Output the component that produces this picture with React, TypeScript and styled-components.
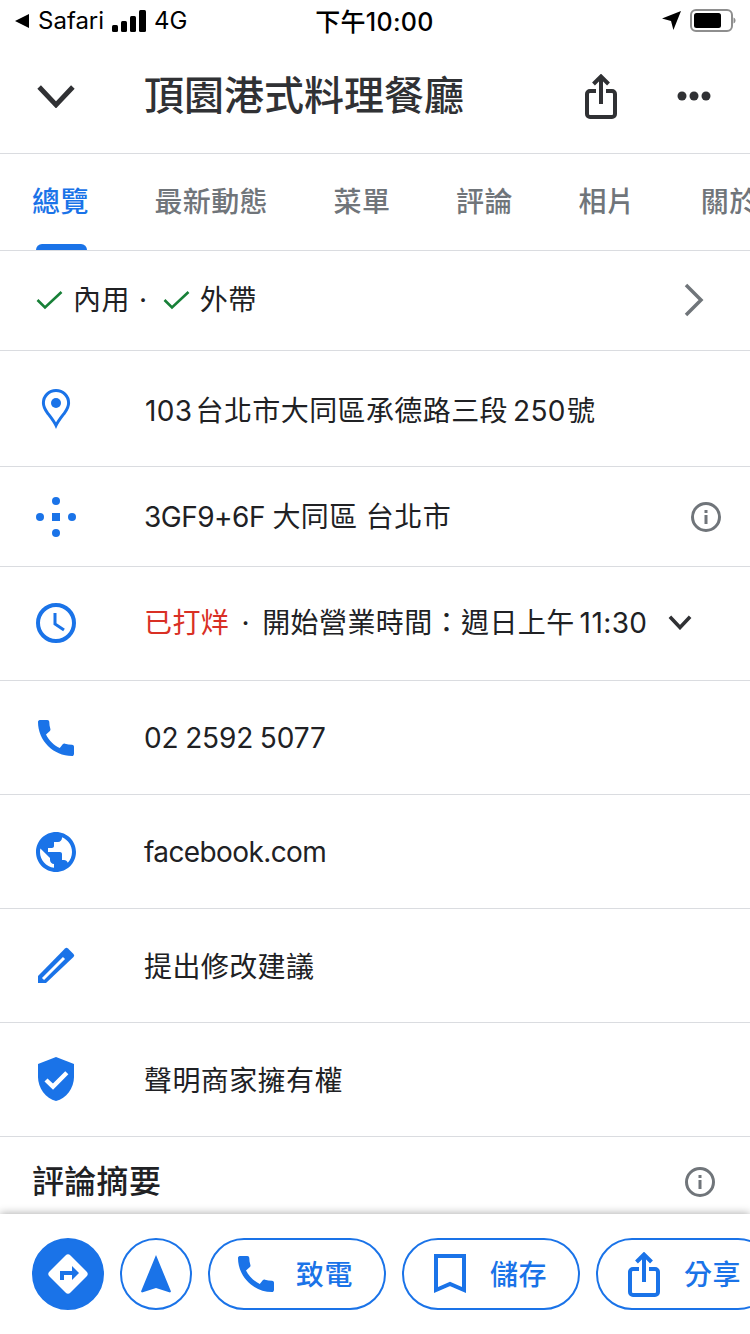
import React from 'react';
import styled, { createGlobalStyle } from 'styled-components';

const BLUE = '#1a73e8';
const GRAY = '#70757a';
const INK = '#202124';
const DARK = '#303134';
const LINE = '#dadce0';

const GlobalStyle = createGlobalStyle`
    html, body {
        margin: 0;
        padding: 0;
        background: #fff;
    }
    body {
        font-family: Inter, "Noto Sans CJK TC", sans-serif;
        color: ${INK};
    }
`;

const Page = styled.div`
    width: 750px;
    height: 1334px;
    display: flex;
    flex-direction: column;
    overflow: hidden;
    background: #fff;
`;

const StatusBar = styled.div`
    height: 41px;
    flex: none;
    padding: 0 14px 0 15px;
    box-sizing: border-box;
    display: grid;
    grid-template-columns: 1fr auto 1fr;
    align-items: center;
    font-size: 24px;
    color: #000;
`;

const StatusLeft = styled.div`
    display: flex;
    align-items: center;
    gap: 8px;
`;

const Carrier = styled.span`
    margin-left: 1px;
`;

const StatusRight = styled.div`
    display: flex;
    align-items: center;
    justify-content: flex-end;
    gap: 9px;
`;

const Time = styled.div`
    margin: -2px 1px 0 -1px;
    font-size: 25px;
    font-weight: 500;
    letter-spacing: 0.3px;
`;

const Header = styled.header`
    height: 113px;
    flex: none;
    display: flex;
    align-items: center;
    padding: 0 39px 2px 36px;
    border-bottom: 1px solid ${LINE};
    box-sizing: border-box;
`;

const BackSlot = styled.div`
    width: 108px;
    display: flex;
    flex: none;
`;

const Title = styled.h1`
    flex: 1;
    margin: 0;
    font-size: 40px;
    font-weight: 500;
    color: ${DARK};
    line-height: 1;
`;

const HeaderActions = styled.div`
    display: flex;
    align-items: center;
    gap: 60px;
`;

const Tabs = styled.nav`
    height: 97px;
    flex: none;
    display: flex;
    gap: 65.6px;
    padding-left: 32px;
    border-bottom: 1px solid ${LINE};
    box-sizing: border-box;
    overflow: hidden;
`;

const Tab = styled.div<{ $active?: boolean }>`
    position: relative;
    flex: none;
    display: flex;
    align-items: center;
    padding-bottom: 4px;
    font-size: 28px;
    font-weight: 500;
    letter-spacing: 0.4px;
    white-space: nowrap;
    color: ${p => (p.$active ? BLUE : GRAY)};
    ${p =>
        p.$active &&
        `&::after {
            content: '';
            position: absolute;
            left: 4px;
            right: 2px;
            bottom: 0;
            height: 6px;
            border-radius: 6px 6px 0 0;
            background: ${BLUE};
        }`}
`;

const Content = styled.main`
    flex: 1;
    min-height: 0;
    overflow: hidden;
`;

const Row = styled.div<{ $h: number; $left?: number; $right?: number; $lift?: number }>`
    height: ${p => p.$h}px;
    display: flex;
    align-items: center;
    padding: 0 ${p => p.$right ?? 29}px ${p => p.$lift ?? 0}px ${p => p.$left ?? 32}px;
    border-bottom: 1px solid ${LINE};
    box-sizing: border-box;
    font-size: 28px;
    line-height: 1;
    letter-spacing: 0.4px;
`;

const IconSlot = styled.div`
    width: 48px;
    height: 48px;
    margin-right: 64px;
    flex: none;
    display: flex;
    align-items: center;
    justify-content: center;
`;

const RowText = styled.div<{ $drop?: number }>`
    flex: 1;
    white-space: nowrap;
    margin-top: ${p => p.$drop ?? 0}px;
`;

const Latin = styled.span<{ $ls: number; $ws?: number }>`
    letter-spacing: ${p => p.$ls}px;
    word-spacing: ${p => p.$ws ?? 0}px;
`;

const Services = styled.div`
    flex: 1;
    display: flex;
    align-items: center;
    gap: 3px;
`;

const ServiceItem = styled.span`
    display: inline-flex;
    align-items: center;
    gap: 10px;
`;

const ServiceDot = styled.span`
    width: 27px;
    padding-right: 6px;
    box-sizing: border-box;
    text-align: center;
`;

const Closed = styled.span`
    color: #d93025;
`;

const InlineDot = styled.span`
    display: inline-block;
    width: 33px;
    text-align: center;
`;

const Num = styled.span<{ $w: number }>`
    margin-left: ${p => p.$w}px;
`;

const SummaryRow = styled.div`
    height: 76px;
    display: flex;
    align-items: center;
    justify-content: space-between;
    padding: 25px 35px 11px 32px;
    box-sizing: border-box;
`;

const SummaryTitle = styled.h2`
    margin: 0;
    font-size: 32px;
    font-weight: 500;
    line-height: 40px;
    letter-spacing: 0.3px;
`;

const ActionBar = styled.footer`
    position: relative;
    height: 120px;
    flex: none;
    display: flex;
    gap: 16px;
    padding: 24px 0 0 32px;
    box-sizing: border-box;
    overflow: hidden;
    background: #fff;
    box-shadow: 0 -1px 8px rgba(0, 0, 0, 0.3);
`;

const RoundButton = styled.div<{ $filled?: boolean }>`
    width: 72px;
    height: 72px;
    flex: none;
    border-radius: 50%;
    border: 2px solid ${BLUE};
    box-sizing: border-box;
    display: flex;
    align-items: center;
    justify-content: center;
    background: ${p => (p.$filled ? BLUE : '#fff')};
`;

const PillButton = styled.div`
    width: 178px;
    height: 72px;
    flex: none;
    border-radius: 36px;
    border: 2px solid ${BLUE};
    box-sizing: border-box;
    display: flex;
    align-items: center;
    padding-left: 22px;
    gap: 16px;
    color: ${BLUE};
    font-size: 28px;
    font-weight: 500;
`;

const PillIcon = styled.div`
    width: 48px;
    height: 48px;
    flex: none;
    display: flex;
    align-items: center;
    justify-content: center;
`;

const PillLabel = styled.span`
    letter-spacing: 0.4px;
    margin-top: -2px;
`;

const BackArrow = () => (
    <svg width="14" height="14" viewBox="0 0 14 14">
        <path d="M14 0v14L0 7z" fill="#000" />
    </svg>
);

const Signal = () => (
    <svg width="34" height="22" viewBox="0 0 34 22">
        <rect x="0" y="15" width="6" height="7" rx="1.5" fill="#000" />
        <rect x="9" y="11" width="6" height="11" rx="1.5" fill="#000" />
        <rect x="18" y="6" width="6" height="16" rx="1.5" fill="#000" />
        <rect x="27" y="0" width="7" height="22" rx="1.5" fill="#000" />
    </svg>
);

const LocationArrow = () => (
    <svg width="19" height="19" viewBox="0 0 20 20">
        <path d="M20 0L12 20l-2.500-9.500L0 8z" fill="#000" />
    </svg>
);

const Battery = () => (
    <svg width="46" height="23" viewBox="0 0 46 23">
        <rect x="1" y="1" width="41" height="21" rx="5" fill="none" stroke="#8e8e8e" strokeWidth="2" />
        <rect x="4" y="4" width="27" height="15" rx="2.500" fill="#000" />
        <path d="M43.500 8.500c1.200.3 2 1.600 2 3s-.8 2.700-2 3z" fill="#8e8e8e" />
    </svg>
);

const ChevronDown = ({ size = 40, sw = 5 }: { size?: number; sw?: number }) => (
    <svg width={size} height={size * 0.62} viewBox="0 0 40 25">
        <path d="M3 3l17 18L37 3" fill="none" stroke={DARK} strokeWidth={sw} />
    </svg>
);

const ChevronRight = () => (
    <svg width="22" height="34" viewBox="0 0 22 34">
        <path d="M3 2l15 15L3 32" fill="none" stroke={GRAY} strokeWidth="3.500" />
    </svg>
);

const ShareIcon = ({ color, sw = 4 }: { color: string; sw?: number }) => (
    <svg width="32" height="45" viewBox="0 0 32 45">
        <path
            d="M11 17H5a3 3 0 0 0-3 3v20a3 3 0 0 0 3 3h22a3 3 0 0 0 3-3V20a3 3 0 0 0-3-3h-6"
            fill="none"
            stroke={color}
            strokeWidth={sw}
        />
        <path d="M16 30V4" fill="none" stroke={color} strokeWidth={sw} />
        <path d="M8.500 10L16 2.500 23.500 10" fill="none" stroke={color} strokeWidth={sw} />
    </svg>
);

const MoreDots = () => (
    <svg width="34" height="10" viewBox="0 0 34 10">
        <circle cx="5" cy="5" r="4.500" fill={DARK} />
        <circle cx="17" cy="5" r="4.500" fill={DARK} />
        <circle cx="29" cy="5" r="4.500" fill={DARK} />
    </svg>
);

const Check = () => (
    <svg width="27" height="20" viewBox="0 0 27 20">
        <path d="M1.500 10l7.500 7.500L25.500 2" fill="none" stroke="#188038" strokeWidth="2.600" />
    </svg>
);

const Info = () => (
    <svg width="30" height="30" viewBox="0 0 30 30">
        <circle cx="15" cy="15" r="13.500" fill="none" stroke={GRAY} strokeWidth="3" />
        <rect x="13.500" y="13" width="3" height="9" fill={GRAY} />
        <rect x="13.500" y="8" width="3" height="3" fill={GRAY} />
    </svg>
);

const PinIcon = () => (
    <svg width="48" height="48" viewBox="0 0 48 48">
        <path
            d="M24 5.500c-7 0-12.600 5.500-12.600 12.500 0 3.600 1.500 6.400 4 9.800 2.500 3.300 6.600 8.300 8.600 12.700 2-4.400 6.100-9.400 8.600-12.700 2.500-3.400 4-6.200 4-9.800 0-7-5.600-12.500-12.600-12.500z"
            fill="none"
            stroke={BLUE}
            strokeWidth="3"
        />
        <circle cx="24" cy="18" r="5" fill={BLUE} />
    </svg>
);

const PlusCodeIcon = () => (
    <svg width="48" height="48" viewBox="0 0 48 48">
        <circle cx="24" cy="8" r="4" fill={BLUE} />
        <circle cx="24" cy="40" r="4" fill={BLUE} />
        <circle cx="8" cy="24" r="4" fill={BLUE} />
        <circle cx="40" cy="24" r="4" fill={BLUE} />
        <rect x="20" y="20" width="8" height="8" fill={BLUE} />
    </svg>
);

const ClockIcon = () => (
    <svg width="40" height="40" viewBox="0 0 40 40">
        <circle cx="20" cy="20" r="18" fill="none" stroke={BLUE} strokeWidth="4" />
        <path d="M19 10v11l9 6" fill="none" stroke={BLUE} strokeWidth="3" />
    </svg>
);

const PhoneIcon = () => (
    <svg width="48" height="48" viewBox="0 0 24 24">
        <path
            fill={BLUE}
            d="M20.010 15.380c-1.230 0-2.420-.2-3.530-.56-.35-.12-.74-.03-1.010.24l-1.570 1.970c-2.830-1.350-5.480-3.900-6.890-6.830l1.950-1.660c.27-.28.35-.67.24-1.020-.37-1.110-.56-2.300-.56-3.530 0-.54-.45-.99-.99-.99H4.190C3.650 3 3 3.240 3 3.990 3 13.280 10.730 21 20.010 21c.71 0 .99-.63.99-1.180v-3.450c0-.54-.45-.99-.99-.99z"
        />
    </svg>
);

const GlobeIcon = () => (
    <svg width="48" height="48" viewBox="0 0 24 24">
        <path
            fill={BLUE}
            d="M12 2C6.480 2 2 6.480 2 12s4.480 10 10 10 10-4.480 10-10S17.520 2 12 2zm-1 17.930c-3.950-.49-7-3.850-7-7.930 0-.62.08-1.210.21-1.790L9 15v1c0 1.100.9 2 2 2v1.930zm6.900-2.540c-.26-.81-1-1.390-1.900-1.390h-1v-3c0-.55-.45-1-1-1H8v-2h2c.55 0 1-.45 1-1V7h2c1.100 0 2-.9 2-2v-.41c2.930 1.190 5 4.060 5 7.410 0 2.080-.8 3.970-2.100 5.390z"
        />
    </svg>
);

const PencilIcon = () => (
    <svg width="48" height="48" viewBox="0 0 48 48">
        <path fill={BLUE} d="M6 41v-7L33 6.500q1.500-1.500 3 0l5.500 5.500q1.500 1.500 0 3L14 41z" />
        <path d="M11 37L32 16" fill="none" stroke="#fff" strokeWidth="3" />
    </svg>
);

const ShieldIcon = () => (
    <svg width="48" height="48" viewBox="0 0 24 24">
        <path fill={BLUE} d="M12 .5L3 4V10.500c0 5.550 3.840 10.740 9 12 5.160-1.260 9-6.450 9-12V4z" />
        <path d="M7 12l3.500 3.300 6.900-6.900" fill="none" stroke="#fff" strokeWidth="2.200" />
    </svg>
);

const DirectionsIcon = () => (
    <svg width="40" height="40" viewBox="0 0 40 40">
        <path
            fill="#fff"
            d="M17.500 1.500a3.500 3.500 0 0 1 5 0l16 16a3.500 3.500 0 0 1 0 5l-16 16a3.500 3.500 0 0 1-5 0l-16-16a3.500 3.500 0 0 1 0-5z"
        />
        <path d="M14 26v-7h11" fill="none" stroke={BLUE} strokeWidth="4" />
        <path d="M24 12l7 7-7 7z" fill={BLUE} />
    </svg>
);

const NavArrow = () => (
    <svg width="30" height="38" viewBox="0 0 30 38">
        <path d="M15 0l15 36.500-1 1L15 33 1 37.500l-1-1z" fill={BLUE} />
    </svg>
);

const BookmarkIcon = () => (
    <svg width="32" height="40" viewBox="0 0 32 40">
        <path d="M2 2h28v34l-14-6-14 6z" fill="none" stroke={BLUE} strokeWidth="4" />
    </svg>
);

const tabs = ['總覽', '最新動態', '菜單', '評論', '相片', '關於'];

const App: React.FC = () => (
    <Page>
        <GlobalStyle />
        <StatusBar>
            <StatusLeft>
                <BackArrow />
                <Carrier>Safari</Carrier>
                <Signal />
                <span>4G</span>
            </StatusLeft>
            <Time>下午10:00</Time>
            <StatusRight>
                <LocationArrow />
                <Battery />
            </StatusRight>
        </StatusBar>
        <Header>
            <BackSlot>
                <ChevronDown />
            </BackSlot>
            <Title>頂園港式料理餐廳</Title>
            <HeaderActions>
                <ShareIcon color={DARK} />
                <MoreDots />
            </HeaderActions>
        </Header>
        <Tabs>
            {tabs.map((t, i) => (
                <Tab key={t} $active={i === 0}>
                    {t}
                </Tab>
            ))}
        </Tabs>
        <Content>
            <Row $h={100} $left={36} $right={45} $lift={2}>
                <Services>
                    <ServiceItem>
                        <Check />
                        內用
                    </ServiceItem>
                    <ServiceDot>·</ServiceDot>
                    <ServiceItem>
                        <Check />
                        外帶
                    </ServiceItem>
                </Services>
                <ChevronRight />
            </Row>
            <Row $h={116}>
                <IconSlot>
                    <PinIcon />
                </IconSlot>
                <RowText $drop={4}>
                    <Num $w={1}>103</Num>
                    <Num $w={3}>台北市大同區承德路三段</Num>
                    <Num $w={5}>250</Num>
                    <Num $w={1}>號</Num>
                </RowText>
            </Row>
            <Row $h={100}>
                <IconSlot>
                    <PlusCodeIcon />
                </IconSlot>
                <RowText>
                    <Latin $ls={-0.5}>3GF9+6F </Latin>大同區 台北市
                </RowText>
                <Info />
            </Row>
            <Row $h={114} $right={58} $lift={2}>
                <IconSlot>
                    <ClockIcon />
                </IconSlot>
                <RowText>
                    <Closed>已打烊</Closed>
                    <InlineDot>·</InlineDot>開始營業時間：週日上午
                    <Num $w={5}>11:30</Num>
                </RowText>
                <ChevronDown size={24} sw={6} />
            </Row>
            <Row $h={114}>
                <IconSlot>
                    <PhoneIcon />
                </IconSlot>
                <RowText>
                    <Latin $ls={-0.15} $ws={-1}>02 2592 5077</Latin>
                </RowText>
            </Row>
            <Row $h={114}>
                <IconSlot>
                    <GlobeIcon />
                </IconSlot>
                <RowText>
                    <Latin $ls={-0.6}>facebook.com</Latin>
                </RowText>
            </Row>
            <Row $h={114}>
                <IconSlot>
                    <PencilIcon />
                </IconSlot>
                <RowText $drop={2}>提出修改建議</RowText>
            </Row>
            <Row $h={114}>
                <IconSlot>
                    <ShieldIcon />
                </IconSlot>
                <RowText $drop={2}>聲明商家擁有權</RowText>
            </Row>
            <SummaryRow>
                <SummaryTitle>評論摘要</SummaryTitle>
                <Info />
            </SummaryRow>
        </Content>
        <ActionBar>
            <RoundButton $filled>
                <DirectionsIcon />
            </RoundButton>
            <RoundButton>
                <NavArrow />
            </RoundButton>
            <PillButton>
                <PillIcon>
                    <PhoneIcon />
                </PillIcon>
                <PillLabel>致電</PillLabel>
            </PillButton>
            <PillButton>
                <PillIcon>
                    <BookmarkIcon />
                </PillIcon>
                <PillLabel>儲存</PillLabel>
            </PillButton>
            <PillButton>
                <PillIcon>
                    <ShareIcon color={BLUE} />
                </PillIcon>
                <PillLabel>分享</PillLabel>
            </PillButton>
        </ActionBar>
    </Page>
);

export default App;
